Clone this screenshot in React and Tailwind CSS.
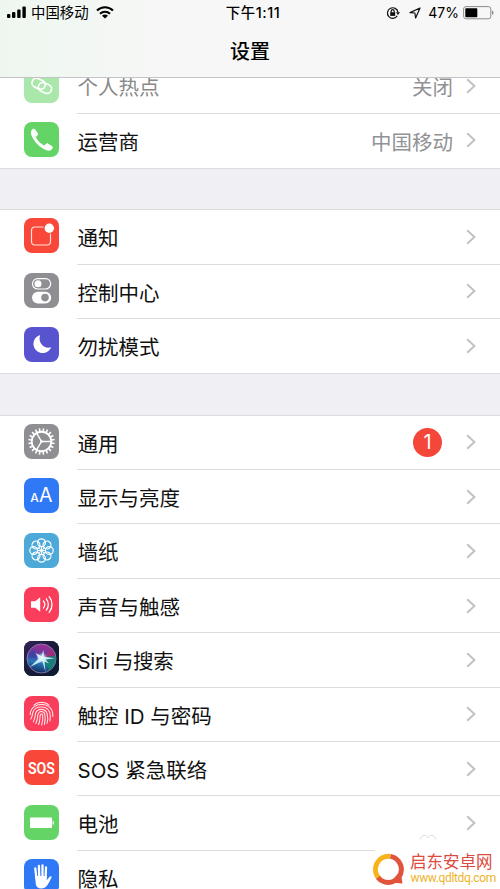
import React from 'react';

const TEETH = Array.from({ length: 20 }, (_, i) => i * 18);
const PETALS = Array.from({ length: 8 }, (_, i) => i * 45);

const HotspotIcon = () => (
  <g fill="none" stroke="#fff" strokeWidth="1.7" strokeLinecap="round">
    <rect x="-6.8" y="-4.6" width="13.6" height="9.2" rx="4.6" transform="translate(14.6 15.8) rotate(24)" />
    <rect x="-6.8" y="-4.6" width="13.6" height="9.2" rx="4.6" transform="translate(21 20) rotate(24)" />
  </g>
);

const PhoneIcon = () => (
  <path
    fill="#fff"
    d="M8.4 7.2c1-.8 2.2-.6 3 .5l2.3 3.3c.6.9.4 1.8-.4 2.5l-1 .9c-.5.5-.5 1-.1 1.7 1.7 2.9 4 5.2 6.9 7 .6.4 1.2.4 1.7-.1l1-1c.7-.8 1.6-.9 2.5-.3l3.6 2.4c1 .7 1.2 1.7.4 2.7-1.5 2-3.8 2.3-6.3 1.2-6.5-2.8-11.9-8.3-14.5-14.6-1-2.5-.8-4.7.9-6.2z"
  />
);

const NotificationIcon = () => (
  <g>
    <path d="M19.5 9H11a3.5 3.5 0 0 0-3.5 3.5v11A3.5 3.5 0 0 0 11 27h12a3.5 3.5 0 0 0 3.5-3.5V15.8" fill="none" stroke="#ffe0db" strokeWidth="1.2" />
    <circle cx="25.3" cy="10.2" r="4.7" fill="#fff" />
  </g>
);

const ControlIcon = () => (
  <g>
    <rect x="8.5" y="5.6" width="18.2" height="10.4" rx="5.2" fill="none" stroke="#fff" strokeWidth="1.2" />
    <circle cx="14" cy="10.8" r="3.5" fill="#fff" />
    <rect x="8" y="18.8" width="19.2" height="11.6" rx="5.8" fill="#fff" />
    <circle cx="21" cy="24.6" r="3.8" fill="#8e8e93" />
  </g>
);

const MoonIcon = () => (
  <path fill="#fff" d="M16.2 8A9.2 9.2 0 1 0 27.2 20.3C20.4 22.6 13.3 15.5 16.2 8z" />
);

const GearIcon = () => (
  <g fill="none" stroke="#fff">
    <circle cx="17.5" cy="17.5" r="9.8" strokeWidth="1.9" />
    {TEETH.map((a) => (
      <path key={a} d="M17.5 7.5V4.2" strokeWidth="1.6" transform={`rotate(${a + 9} 17.5 17.5)`} />
    ))}
    <path d="M17.5 17.5H27M17.5 17.5L12.7 9.3M17.5 17.5L12.7 25.7" strokeWidth="1.4" />
    <circle cx="17.5" cy="17.5" r="1" fill="#fff" strokeWidth="1" />
  </g>
);

const DisplayIcon = () => (
  <g fill="#fff" fontFamily="Inter, sans-serif">
    <text x="6.2" y="23.6" fontSize="12" fontWeight="500">A</text>
    <text x="15" y="23.6" fontSize="19.5" fontWeight="400">A</text>
  </g>
);

const FlowerIcon = () => (
  <g fill="none" stroke="#fff" strokeWidth="1.2">
    {PETALS.map((a) => (
      <g key={a} transform={`rotate(${a} 17.5 17.5)`}>
        <circle cx="17.5" cy="9.7" r="3.9" />
        <path d="M17.5 14L17.5 16" strokeWidth="1" />
      </g>
    ))}
    <circle cx="17.5" cy="17.5" r="1.6" fill="#fff" stroke="none" />
  </g>
);

const SoundIcon = () => (
  <g>
    <path d="M7 14.3h4.2l5-4v14.4l-5-4H7z" fill="#fff" />
    <g fill="none" stroke="#fff" strokeWidth="1.3" strokeLinecap="round">
      <path d="M19.4 14a5.5 5.5 0 0 1 0 7" />
      <path d="M22.3 11.8a9 9 0 0 1 0 11.4" />
      <path d="M25.2 9.6a12.5 12.5 0 0 1 0 15.8" />
    </g>
  </g>
);

const SiriIcon = () => (
  <g>
    <defs>
      <linearGradient id="siriBg" x1="0" y1="0" x2="1" y2="1">
        <stop offset="0" stopColor="#35245c" />
        <stop offset="0.5" stopColor="#171a38" />
        <stop offset="1" stopColor="#0b1b30" />
      </linearGradient>
      <linearGradient id="siriOrb" x1="0.6" y1="0" x2="0.4" y2="1">
        <stop offset="0" stopColor="#a02d93" />
        <stop offset="0.45" stopColor="#5b3d9c" />
        <stop offset="0.65" stopColor="#2479b5" />
        <stop offset="1" stopColor="#15275c" />
      </linearGradient>
      <radialGradient id="siriGlow">
        <stop offset="0" stopColor="#fff" />
        <stop offset="0.35" stopColor="#d5f4ff" stopOpacity="0.7" />
        <stop offset="1" stopColor="#8fd9ff" stopOpacity="0" />
      </radialGradient>
    </defs>
    <rect width="35" height="35" fill="url(#siriBg)" />
    <circle cx="17.5" cy="17.5" r="14.5" fill="url(#siriOrb)" stroke="#9a87bd" strokeWidth="0.8" />
    <path d="M18 17L31.5 14.5A14.5 14.5 0 0 1 25 29.5z" fill="#14826e" opacity="0.85" />
    <path d="M18 17L8 8.5L4.5 17z" fill="#3444a5" opacity="0.7" />
    <path d="M18 17L28 8L31 14z" fill="#b32a69" opacity="0.7" />
    <circle cx="18" cy="17" r="6" fill="url(#siriGlow)" />
    <path d="M11.5 12L17.5 15L19.3 9L20.2 15.8L31 17.3L21.5 18.5L25 22.5L20.5 20.5L21.5 31L18.3 20L6 26L14.5 17.8z" fill="#e1faff" opacity="0.85" />
  </g>
);

const TouchIcon = () => (
  <g fill="none" stroke="#ffe3e7" strokeWidth="1.1" strokeLinecap="round">
    <path d="M10 9.2C14 5.3 21 5.3 25 9.2" />
    <path d="M6.2 18.5C6.8 5 28.2 5 28.8 18.5V20.5" />
    <path d="M6.8 23C8.8 20 8.1 18 9.2 15.5C12 9 23.7 9.5 25.9 17C26.5 20 26.5 22.5 25.9 25" />
    <path d="M9.3 25.8C11.6 22 10.8 19 11.8 16.7C14 12 21.5 12.2 23.2 17.8C24 21 23.8 24.5 23 27.3" />
    <path d="M11.8 27.5C14 23.5 13.3 20 14.1 18C15.4 14.5 19.8 14.6 20.8 18.3C21.5 21.5 21.2 25.5 20.4 28.5" />
    <path d="M14.6 28.5C16.4 24.5 15.6 21.5 16.3 19C16.8 17.6 18.2 17.6 18.6 19C19.2 22 18.6 26 17.6 29" />
  </g>
);

const SosIcon = () => (
  <text x="17.5" y="23.5" textAnchor="middle" fill="#fff" fontFamily="Roboto, sans-serif" fontSize="16.5" fontWeight="600" textLength="27" lengthAdjust="spacingAndGlyphs">
    SOS
  </text>
);

const BatteryIcon = () => (
  <g fill="#fff">
    <rect x="6" y="12.5" width="22" height="10.5" rx="0.8" />
    <path d="M28.7 15.5c1.6.6 1.6 4 0 4.6z" />
  </g>
);

const HandIcon = () => (
  <g>
    <g stroke="#fff" strokeWidth="2.3" strokeLinecap="round">
      <path d="M11.3 9.5L12.3 19" />
      <path d="M14.9 7L15.2 18" />
      <path d="M18.5 6.5V18" />
      <path d="M22 8.5L21.6 19" />
    </g>
    <path d="M11.1 17h11.6v4.2l2.7-3.3c.9-1.1 2.7-.7 2.1.7-1.3 3-2.7 5.6-4.4 8-1.5 2.1-3.3 3-5.8 3-3.4 0-5.2-1.9-5.6-5.2z" fill="#fff" />
  </g>
);

const GROUPS = [
  [
    { label: '个人热点', value: '关闭', color: 'bg-[#65d466]', icon: HotspotIcon, disabled: true },
    { label: '运营商', value: '中国移动', color: 'bg-[#65d466]', icon: PhoneIcon },
  ],
  [
    { label: '通知', color: 'bg-[#f94839]', icon: NotificationIcon },
    { label: '控制中心', color: 'bg-[#8e8e93]', icon: ControlIcon },
    { label: '勿扰模式', color: 'bg-[#5854d0]', icon: MoonIcon },
  ],
  [
    { label: '通用', badge: 1, color: 'bg-[#8e8e93]', icon: GearIcon },
    { label: '显示与亮度', color: 'bg-[#2f78f6]', icon: DisplayIcon },
    { label: '墙纸', color: 'bg-[#4daad8]', icon: FlowerIcon },
    { label: '声音与触感', color: 'bg-[#fb3d5c]', icon: SoundIcon },
    { label: 'Siri 与搜索', color: 'bg-[#171a38]', icon: SiriIcon, tight: true },
    { label: '触控 ID 与密码', color: 'bg-[#fb3d5c]', icon: TouchIcon },
    { label: 'SOS 紧急联络', color: 'bg-[#f94839]', icon: SosIcon },
    { label: '电池', color: 'bg-[#65d466]', icon: BatteryIcon },
    { label: '隐私', color: 'bg-[#2f78f6]', icon: HandIcon },
  ],
];

const Row = ({ item, last }) => {
  const Icon = item.icon;
  return (
    <div className="flex h-[54.4px] pl-6">
      <div className={`mt-[8.2px] h-[35px] w-[35px] shrink-0 overflow-hidden rounded-lg ${item.color} ${item.disabled ? 'opacity-55' : ''}`}>
        <svg viewBox="0 0 35 35" className="block h-full w-full">
          <Icon />
        </svg>
      </div>
      <div className={`ml-[18px] flex flex-1 items-center border-b pr-6 ${last ? 'border-transparent' : 'border-[#dcdcde]'}`}>
        <span className={`flex-1 whitespace-nowrap pl-[0.5px] pt-[5px] text-[20.5px] leading-none ${item.disabled ? 'text-[#8a8a8a]' : 'text-[#111]'} ${item.tight ? 'tracking-[-0.3px]' : ''}`}>
          {item.label}
        </span>
        {item.value && <span className="mr-[13px] pt-[5px] text-[20.5px] leading-none text-[#929296]">{item.value}</span>}
        {item.badge && (
          <span className="mr-6 flex h-[29px] w-[29px] items-center justify-center rounded-full bg-[#f5463a] text-[20px] leading-none text-white">
            {item.badge}
          </span>
        )}
        <svg viewBox="0 0 10 16" className="h-4 w-2.5" fill="none" stroke="#c2c2c6" strokeWidth="2">
          <path d="M1.2 1.2L8.4 8L1.2 14.8" />
        </svg>
      </div>
    </div>
  );
};

const StatusBar = () => (
  <div className="grid h-[25px] grid-cols-3 items-center px-[7px] text-[14.4px] leading-none text-black">
    <div className="flex items-center">
      <svg viewBox="0 0 20 13" className="mr-[4px] h-[13px] w-[20px]">
        <rect x="0" y="8" width="3.4" height="4" rx="1" />
        <rect x="5" y="6" width="3.4" height="6" rx="1" />
        <rect x="10.2" y="3.5" width="3.4" height="8.5" rx="1" />
        <rect x="15.4" y="0.5" width="3.4" height="11.5" rx="1" />
      </svg>
      <span className="pt-[2px]">中国移动</span>
      <svg viewBox="0 0 18 13" className="ml-[7px] h-[13px] w-[18px]" fill="none" stroke="#000" strokeWidth="2.1">
        <path d="M1 4.5C5.5 0.2 12.5 0.2 17 4.5" />
        <path d="M4 7.7C6.9 5 11.1 5 14 7.7" />
        <path d="M9 12.5L6 9.7C7.7 8.2 10.3 8.2 12 9.7z" fill="#000" stroke="none" />
      </svg>
    </div>
    <div className="pl-1.5 pt-[2px] text-center font-medium tracking-[0.6px]">下午1:11</div>
    <div className="flex items-center justify-end">
      <svg viewBox="0 0 14 14" className="mr-[9px] h-[14px] w-[14px]" fill="none" stroke="#111" strokeWidth="1.2">
        <path d="M11.3 9.8A5.3 5.3 0 1 1 12 6.3" />
        <path d="M10 6.2h4l-2 2.7z" fill="#111" stroke="none" />
        <rect x="4.2" y="6.2" width="5" height="3.7" fill="#111" stroke="none" />
        <path d="M5.2 6.5V5.2a1.5 1.5 0 0 1 3 0v1.3" />
      </svg>
      <svg viewBox="0 0 12 12" className="mr-[7px] h-3 w-3" fill="none" stroke="#111" strokeWidth="1.2" strokeLinejoin="round">
        <path d="M11 1L1 5.6L5.9 6L6.6 11z" />
      </svg>
      <span className="mr-[4px] pt-[1px] text-[14px]">47%</span>
      <svg viewBox="0 0 31 14" className="-mr-[1px] h-[14px] w-[31px]">
        <rect x="0.6" y="0.6" width="27.2" height="12.2" rx="2.4" fill="none" stroke="#8c8c8c" strokeWidth="1" />
        <rect x="2.3" y="2.2" width="12" height="9" rx="0.8" />
        <path d="M29 4.5c2 .7 2 3.7 0 4.4z" fill="#8c8c8c" />
      </svg>
    </div>
  </div>
);

const Watermark = () => (
  <div className="absolute bottom-0 right-0 flex h-[41px] w-[125px] items-center bg-white">
    <svg viewBox="0 0 34 34" className="-ml-1 h-[34px] w-[34px] shrink-0" fill="none" strokeWidth="5">
      <path d="M8.5 27A13.2 13.2 0 0 1 19.5 4.4" stroke="#f8b21c" />
      <path d="M19.5 4.4A13.2 13.2 0 0 1 27.5 25.5" stroke="#e2533c" />
      <path d="M27.5 25.5A13.2 13.2 0 0 1 7 25.5" stroke="#e2533c" />
      <path d="M29.5 19L31.5 31.5L19 30.5z" fill="#e2533c" />
    </svg>
    <div className="ml-[5px] flex flex-col whitespace-nowrap">
      <span className="pt-[1px] text-[16.5px] leading-[18px] text-[#dc4b40]">启东安卓网</span>
      <span className="pl-[0.5px] font-['Roboto',sans-serif] text-[12px] leading-[15px] tracking-[-0.35px] text-[#eeb42c]">www.qdltdq.com</span>
    </div>
  </div>
);

const App = () => {
  return (
    <div className="relative flex h-[889px] w-[500px] flex-col overflow-hidden bg-white font-['Inter','Noto_Sans_CJK_SC',sans-serif]">
      {/* Header */}
      <header className="z-10 h-[78px] shrink-0 border-b border-[#c4c4c6] bg-[#f7f7f7] bg-gradient-to-r from-[#eef7ef] via-[#f6f7f6] via-30% to-[#f7f7f7]">
        <StatusBar />
        <h1 className="pt-[11px] text-center text-[20px] font-medium leading-[32px] text-black">设置</h1>
      </header>

      {/* Settings list, scrolled under the header */}
      <main className="-mt-[18.7px] flex shrink-0 flex-col gap-[42.2px] bg-[#efeff4]">
        {GROUPS.map((group, i) => (
          <section key={i} className="bg-white outline outline-[#dcdcde]">
            {group.map((item, j) => (
              <Row key={item.label} item={item} last={j === group.length - 1} />
            ))}
          </section>
        ))}
      </main>

      <svg viewBox="0 0 18 6" className="absolute left-[419px] top-[834px] h-1.5 w-[18px]" fill="none" stroke="#dedede">
        <path d="M1 5.5C3 0 7 0 9 4C11 0 15 0 17 5.5" />
      </svg>
      <Watermark />
    </div>
  );
};

export default App;
